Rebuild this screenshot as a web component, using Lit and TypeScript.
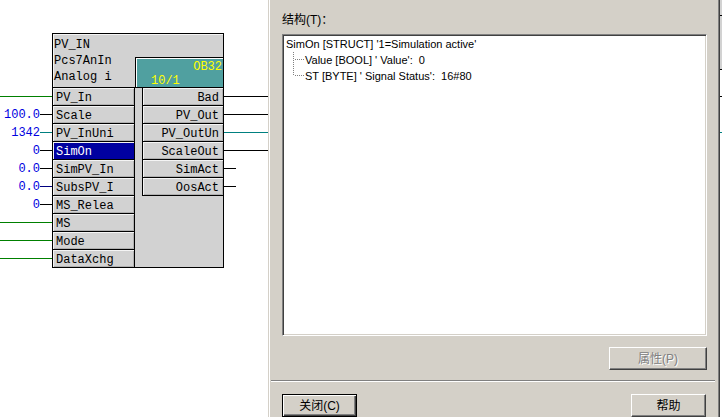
import { LitElement, html, css } from "lit";
import { customElement, property } from "lit/decorators.js";
import { classMap } from "lit/directives/class-map.js";

type Tone = "green" | "black" | "teal" | "navy";

interface Pin {
  name: string;
  tone: Tone;
  value?: string;
  selected?: boolean;
  stub?: boolean;
}

const INPUTS: Pin[] = [
  { name: "PV_In", tone: "green" },
  { name: "Scale", tone: "black", value: "100.0" },
  { name: "PV_InUni", tone: "teal", value: "1342" },
  { name: "SimOn", tone: "black", value: "0", selected: true },
  { name: "SimPV_In", tone: "black", value: "0.0" },
  { name: "SubsPV_I", tone: "navy", value: "0.0" },
  { name: "MS_Relea", tone: "black", value: "0" },
  { name: "MS", tone: "green" },
  { name: "Mode", tone: "green" },
  { name: "DataXchg", tone: "green" },
];

const OUTPUTS: Pin[] = [
  { name: "Bad", tone: "black" },
  { name: "PV_Out", tone: "black" },
  { name: "PV_OutUn", tone: "teal" },
  { name: "ScaleOut", tone: "black" },
  { name: "SimAct", tone: "black", stub: true },
  { name: "OosAct", tone: "black", stub: true },
];

@customElement("function-block")
export class FunctionBlock extends LitElement {
  @property({ attribute: false }) inputs: Pin[] = [];
  @property({ attribute: false }) outputs: Pin[] = [];

  static styles = css`
    :host {
      display: grid;
      grid-template-columns: 52px 172px 1fr;
      font: 12px/17px "Liberation Mono", "Noto Sans CJK SC", monospace;
      color: #000;
      white-space: nowrap;
    }
    .wires {
      padding-top: 55px;
    }
    .wire-row {
      display: flex;
      align-items: center;
      justify-content: flex-end;
      height: 17px;
      padding-bottom: 1px;
    }
    .wires.right .wire-row {
      justify-content: flex-start;
    }
    .value {
      padding-top: 2px;
      line-height: 15px;
      color: #0000e0;
    }
    .wire {
      flex: 1;
      height: 1px;
      background: #000;
    }
    .wire.short {
      flex: 0 0 12px;
    }
    .wire.green {
      background: #008000;
    }
    .wire.teal {
      background: #008080;
    }
    .wire.navy {
      background: #000080;
    }
    .block {
      display: flex;
      flex-direction: column;
      background: #d2d2d2;
      border: 1px solid #000;
    }
    .head {
      display: flex;
      height: 53px;
      border-bottom: 1px solid #000;
    }
    .titles {
      flex: 0 0 82px;
      padding-top: 3px;
      line-height: 16px;
      text-indent: 1px;
      box-shadow: inset 1px 1px #f4f4f4;
    }
    .task-col {
      flex: 1;
      display: flex;
      flex-direction: column;
      justify-content: flex-end;
      box-shadow: inset 0 1px #f4f4f4;
    }
    .task {
      height: 27px;
      border-top: 1px solid #000;
      border-left: 1px solid #000;
      background: #50a0a0;
      box-shadow: inset 1px 1px #fff;
      color: #ff0;
      line-height: 14px;
      padding-top: 2px;
    }
    .ob {
      text-align: right;
      padding-right: 1px;
    }
    .order {
      padding-left: 15px;
    }
    .body {
      display: flex;
      justify-content: space-between;
    }
    .inputs {
      width: 81px;
      border-right: 1px solid #000;
    }
    .outputs {
      width: 80px;
      border-left: 1px solid #000;
      align-self: flex-start;
      text-align: right;
    }
    .pin {
      height: 14px;
      line-height: 15px;
      padding: 3px 3px 0;
      border-bottom: 1px solid #000;
      box-shadow: inset 1px 1px #f4f4f4, inset -1px -1px #b0b0b0;
    }
    .outputs .pin {
      padding-right: 4px;
    }
    .inputs .pin:last-child {
      border-bottom: 0;
    }
    .pin.selected {
      background: #0000a0;
      color: #fff;
      box-shadow: inset 1px 1px #f4f4f4;
    }
  `;

  private wire(pin: Pin) {
    return html`<span
      class=${classMap({
        wire: true,
        short: pin.value !== undefined || !!pin.stub,
        [pin.tone]: true,
      })}
    ></span>`;
  }

  render() {
    return html`
      <div class="wires">
        ${this.inputs.map(
          (p) => html`<div class="wire-row">${p.value ? html`<span class="value">${p.value}</span>` : ""}${this.wire(p)}</div>`
        )}
      </div>
      <div class="block">
        <div class="head">
          <div class="titles"><div>PV_IN</div><div>Pcs7AnIn</div><div>Analog i</div></div>
          <div class="task-col">
            <div class="task"><div class="ob">OB32</div><div class="order">10/1</div></div>
          </div>
        </div>
        <div class="body">
          <div class="inputs">
            ${this.inputs.map((p) => html`<div class=${classMap({ pin: true, selected: !!p.selected })}>${p.name}</div>`)}
          </div>
          <div class="outputs">${this.outputs.map((p) => html`<div class="pin">${p.name}</div>`)}</div>
        </div>
      </div>
      <div class="wires right">
        ${this.outputs.map((p) => html`<div class="wire-row">${this.wire(p)}</div>`)}
      </div>
    `;
  }
}

@customElement("struct-dialog")
export class StructDialog extends LitElement {
  static styles = css`
    :host {
      display: flex;
      flex-direction: column;
      box-sizing: border-box;
      background: #d4d0c8;
      border-left: 1px solid #d4d0c8;
      border-right: 1px solid #404040;
      box-shadow: inset 1px 0 #fff, inset -1px 0 #808080;
      padding: 0 1px;
      font: 12px/16px "Liberation Sans", "Noto Sans CJK SC", sans-serif;
      color: #000;
    }
    .label {
      height: 22px;
      padding: 12px 12px 0;
    }
    .tree {
      flex: 1;
      margin: 0 11px 0 12px;
      padding: 1px 2px;
      background: #fff;
      border: 1px solid;
      border-color: #808080 #fff #fff #808080;
      box-shadow: inset 1px 1px #404040, inset -1px -1px #d4d0c8;
      font-size: 11px;
    }
    ul {
      list-style: none;
      margin: 0;
      padding: 0;
    }
    .root {
      padding: 0 1px;
    }
    .children {
      padding-left: 8px;
    }
    .child {
      display: flex;
      height: 16px;
      white-space: pre;
    }
    .branch {
      flex: 0 0 12px;
      height: 16px;
    }
    .branch path {
      stroke: #808080;
      stroke-dasharray: 1 1;
      fill: none;
    }
    .actions {
      display: flex;
      justify-content: flex-end;
      padding: 11px 11px 10px;
    }
    .rule {
      height: 1px;
      margin: 0 3px 0 1px;
      background: #808080;
      border-bottom: 1px solid #fff;
    }
    .footer {
      display: flex;
      justify-content: space-between;
      padding: 12px 12px 0;
    }
    button {
      box-sizing: border-box;
      width: 75px;
      height: 23px;
      padding: 0;
      font: inherit;
      color: #000;
      background: #d4d0c8;
      border: 1px solid;
      border-color: #fff #404040 #404040 #fff;
      border-radius: 0;
      box-shadow: inset -1px -1px #808080;
    }
    button.default {
      border-color: #000;
      box-shadow: inset 1px 1px #fff, inset -1px -1px #404040, inset -2px -2px #808080;
    }
    button.wide {
      width: 98px;
    }
    button:disabled {
      color: #808080;
      text-shadow: 1px 1px #fff;
    }
  `;

  render() {
    return html`
      <div class="label" id="struct-label">结构(T)：</div>
      <div class="tree">
        <ul role="tree" aria-labelledby="struct-label">
          <li role="treeitem" aria-expanded="true">
            <div class="root">SimOn [STRUCT] '1=Simulation active'</div>
            <ul role="group" class="children">
              <li role="treeitem" class="child"><svg class="branch" viewBox="0 0 12 16"><path d="M.5 0V16M2 7.5H11" /></svg><span>Value [BOOL] ' Value':  0</span></li>
              <li role="treeitem" class="child"><svg class="branch" viewBox="0 0 12 16"><path d="M.5 0V8M2 7.5H11" /></svg><span>ST [BYTE] ' Signal Status':  16#80</span></li>
            </ul>
          </li>
        </ul>
      </div>
      <div class="actions"><button class="wide" disabled>属性(P)</button></div>
      <div class="rule"></div>
      <div class="footer"><button class="default">关闭(C)</button><button>帮助</button></div>
    `;
  }
}

@customElement("app-root")
export class AppRoot extends LitElement {
  static styles = css`
    :host {
      display: flex;
      min-height: 100vh;
      background: #fff;
    }
    function-block {
      flex: 0 0 268px;
      box-sizing: border-box;
      align-self: flex-start;
      padding-top: 33px;
    }
    struct-dialog {
      flex: 1;
    }
    .behind {
      flex: 0 0 2px;
    }
    .cell {
      border-bottom: 1px solid #000;
      height: 26px;
    }
    .cell.face {
      background: #d2d2d2;
      height: 15px;
    }
    .cell.face.tall {
      height: 53px;
    }
    .cell.teal {
      height: 35px;
      border-color: #008080;
    }
  `;

  render() {
    return html`
      <function-block .inputs=${INPUTS} .outputs=${OUTPUTS}></function-block>
      <struct-dialog></struct-dialog>
      <div class="behind">
        <div class="cell face"></div>
        <div class="cell face tall"></div>
        <div class="cell"></div>
        <div class="cell teal"></div>
      </div>
    `;
  }
}
